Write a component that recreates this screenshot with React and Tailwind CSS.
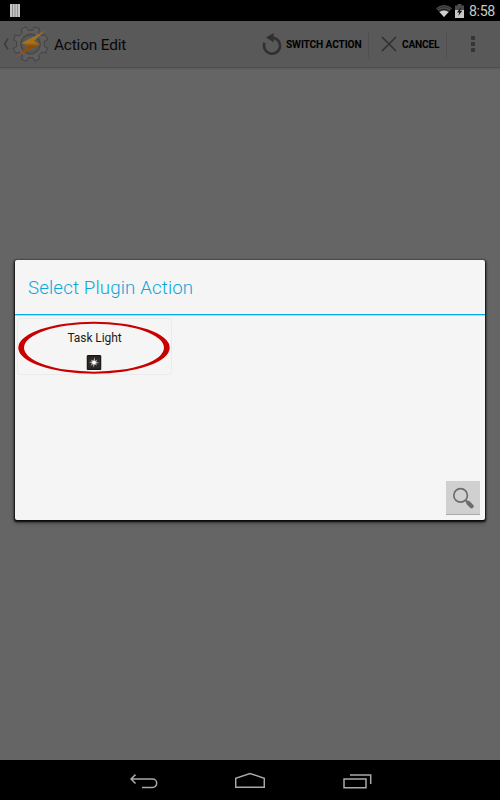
import React from "react";

const TEETH = 8;

// outline of the app's gear, teeth are placed either side of each axis
const gearPoints = () => {
  const points = [];
  for (let i = 0; i < TEETH; i++) {
    const mid = ((i + 0.5) * 360) / TEETH;
    [
      [-13, 14],
      [-10, 17.4],
      [8, 17.8],
      [12, 14],
    ].forEach(([offset, radius]) => {
      const angle = ((mid + offset) * Math.PI) / 180;
      points.push(
        `${(18.5 + radius * Math.cos(angle)).toFixed(2)},${(18 + radius * Math.sin(angle)).toFixed(2)}`
      );
    });
  }
  return points.join(" ");
};

const TaskerLogo = () => (
  <svg className="h-9 w-9 shrink-0 overflow-visible" viewBox="0 0 36 36" fill="none">
    <defs>
      <linearGradient id="bolt" x1="0" y1="0" x2="0" y2="1">
        <stop offset="0" stopColor="#9c7226" />
        <stop offset="0.45" stopColor="#a4741a" />
        <stop offset="0.6" stopColor="#8f4a06" />
        <stop offset="1" stopColor="#965410" />
      </linearGradient>
    </defs>
    <polygon
      points={gearPoints()}
      fill="#5e5e5e"
      stroke="#363636"
      strokeWidth="0.7"
      strokeLinejoin="round"
    />
    <circle cx="18.5" cy="18" r="9.8" fill="#595959" stroke="#454545" strokeWidth="1.2" />
    <circle cx="18.5" cy="18" r="8.2" stroke="#4c4c4c" strokeWidth="0.7" />
    <path
      d="M32.8 4.8L9.8 17L16.2 20.4L4.2 30.8L28.2 18.4L22 15Z"
      fill="url(#bolt)"
    />
  </svg>
);

const StatusBar = () => (
  <div className="flex h-[21px] shrink-0 items-center bg-black pl-[10px] pr-[5px]">
    <svg className="h-[13px] w-[10px]" viewBox="0 0 10 13">
      <rect width="10" height="13" fill="#c4c4c4" />
      <path d="M2.5 0V13M5 0V13M7.5 0V13" stroke="#6a6a6a" strokeWidth="0.6" />
    </svg>
    <div className="ml-auto flex items-center">
      <svg className="h-3 w-4" viewBox="0 0 16 12">
        <path d="M0 3.3Q8 -3.1 16 3.3L8 12Z" fill="#4a4a4a" />
        <path d="M2.7 6.1Q8 2.4 13.3 6.1" stroke="#151515" strokeWidth="0.9" fill="none" />
        <path d="M1.2 4.2Q8 -0.7 14.8 4.2" stroke="#222" strokeWidth="0.7" fill="none" />
        <path d="M3.4 7Q8 4 12.6 7L8 12Z" fill="#d0d0d0" />
      </svg>
      <svg className="ml-[3px] h-[14px] w-[9px]" viewBox="0 0 9 14">
        <path d="M2.5 0H6.5V1.5H9V7H0V1.5H2.5Z" fill="#4b4b4b" />
        <path d="M0 6H9V14H0Z" fill="#c8c8c8" />
        <path d="M6 3L2 8.4H4.3L3.3 12L7.3 6.8H5Z" fill="#111" />
      </svg>
      <span className="ml-[5px] w-[26px] whitespace-nowrap pt-px text-[14.2px] leading-5 tracking-[-0.35px] text-[#c8c8c8]">
        8:58
      </span>
    </div>
  </div>
);

const ActionBar = () => (
  <div className="flex h-[47px] shrink-0 items-center border-b border-[#4d4d4d] bg-[#595959] text-black shadow-[0_1px_2px_rgba(0,0,0,0.12)]">
    <svg className="ml-[3px] h-3 w-[6px]" viewBox="0 0 6 12" fill="none">
      <path d="M5 0.6L1.6 6L5 11.4" stroke="#3c3c3c" strokeWidth="1.6" />
    </svg>
    <div className="ml-[3px]">
      <TaskerLogo />
    </div>
    <h1 className="ml-[6px] w-[76px] whitespace-nowrap pt-[2px] text-[15.4px] leading-5 tracking-[-0.18px] text-[#080808]">
      Action Edit
    </h1>

    <div className="ml-auto flex items-center">
      <svg className="h-[22px] w-[20px]" viewBox="0 0 20 22" fill="none">
        <path
          d="M2.6 9.8A8 8 0 1 0 10.4 4.7"
          stroke="#303030"
          strokeWidth="2.6"
        />
        <path d="M4 4.6L11.6 0V9.2Z" fill="#303030" />
      </svg>
      <span className="ml-[4px] w-[77px] whitespace-nowrap pt-px text-[10.2px] font-bold leading-4 tracking-[-0.15px]">
        SWITCH ACTION
      </span>
      <span className="ml-[5px] h-[27px] w-px bg-[#505050]" />
      <svg className="ml-[12px] h-4 w-4" viewBox="0 0 16 16">
        <path d="M1 1L15 15M15 1L1 15" stroke="#303030" strokeWidth="1.6" />
      </svg>
      <span className="ml-[5px] w-[38px] whitespace-nowrap pt-px text-[10.2px] font-bold leading-4 tracking-[-0.2px]">
        CANCEL
      </span>
      <span className="ml-[6px] h-[27px] w-px bg-[#505050]" />
      <div className="ml-[24px] mr-[25px] flex flex-col gap-[2px]">
        <span className="h-1 w-1 bg-[#363636]" />
        <span className="h-1 w-1 bg-[#363636]" />
        <span className="h-1 w-1 bg-[#363636]" />
      </div>
    </div>
  </div>
);

const PluginDialog = () => (
  <div className="flex h-[260px] w-[470px] flex-col rounded-[2px] bg-[#f5f5f5] shadow-[0_1px_2px_0.5px_rgba(0,0,0,0.9),0_3px_5px_rgba(0,0,0,0.3)]">
    <h2 className="h-[54px] shrink-0 pl-[13px] pt-px text-[18.7px] font-light leading-[55px] tracking-[0.14px] text-[#08a6dc]">
      Select Plugin Action
    </h2>
    <div className="h-[2px] shrink-0 border-b border-[#a9dcef] bg-[#08ace4]" />
    <div className="flex flex-1 flex-col pl-[2px] pt-[2px]">
      {/* Plugin tile */}
      <div className="relative flex h-[57px] w-[155px] flex-col items-center rounded-[4px] border border-[#ebebeb]">
        <span className="mt-[11px] text-[12px] leading-4 tracking-[-0.08px] text-[#1a1a1a]">Task Light</span>
        <svg className="mt-[9px] h-[15px] w-[15px] -translate-x-[0.5px]" viewBox="0 0 15 15">
          <rect width="15" height="15" rx="1.5" fill="#171717" />
          <rect x="1.2" y="1.2" width="12.6" height="12.6" rx="1" fill="#2b2827" />
          <path
            d="M8.4 2L8.6 5.8L11 4.6L9.8 6.8L13 7.9L9.6 8.4L10.6 10.6L8.3 9.5L6.8 12.6L6.5 9.3L3.8 11L5.3 8.3L2.4 7.2L5.4 6.6L4.2 4.4L6.8 5.6Z"
            fill="#b0aaa6"
          />
          <circle cx="7.5" cy="7.5" r="1.8" fill="#fff" />
        </svg>
        {/* Red highlight, thicker at the sides */}
        <svg className="absolute left-0 top-[2px] h-[53px] w-[153px]" viewBox="0 0 153 53">
          <path
            fillRule="evenodd"
            fill="#c80000"
            d="M0.3 26.7A75.7 26 0 1 1 151.7 26.7A75.7 26 0 1 1 0.3 26.7ZM6 26.7A70 24 0 1 0 146 26.7A70 24 0 1 0 6 26.7Z"
          />
        </svg>
      </div>
      <button
        type="button"
        className="mb-[5px] ml-auto mr-[5px] mt-auto flex h-[34px] w-[34px] items-center justify-center border-b border-[#aaa] bg-[#d0d0d0]"
      >
        <svg className="h-[22px] w-[22px]" viewBox="0 0 22 22" fill="none">
          <circle cx="8.6" cy="8.4" r="6.8" stroke="#6c6c6c" strokeWidth="1.7" />
          <path d="M13.4 13L16 15.5" stroke="#6c6c6c" strokeWidth="2" />
          <path d="M16.4 16L19.6 19.2" stroke="#6c6c6c" strokeWidth="4.2" strokeLinecap="round" />
        </svg>
      </button>
    </div>
  </div>
);

const NavBar = () => (
  <div className="flex h-10 shrink-0 items-center bg-black pl-[130px]">
    <svg className="h-[15px] w-[28px] translate-y-px" viewBox="0 0 28 15" fill="none" stroke="#a9a9a9" strokeWidth="1.5">
      <path d="M1 5H22.5A4.2 4.2 0 0 1 22.5 13.4H12M5.5 0.6L1 5L5.5 9.6" />
    </svg>
    <svg className="ml-[77px] h-4 w-[30px]" viewBox="0 0 30 16" fill="none" stroke="#a9a9a9" strokeWidth="1.5">
      <path d="M0.7 15.3V6.2L15 1.5L29.3 6.2V15.3Z" />
    </svg>
    <svg className="ml-[78px] h-[15px] w-[29px] translate-y-px" viewBox="0 0 29 15" fill="none" stroke="#a9a9a9" strokeWidth="1.5">
      <path d="M1 5H23V13.7H1ZM7 1H27.7V10" />
    </svg>
  </div>
);

const App = () => {
  return (
    <div className="flex h-[800px] w-[500px] flex-col overflow-hidden bg-[#656565] font-[Roboto,sans-serif]">
      <StatusBar />
      <ActionBar />
      <main className="flex flex-1 flex-col items-center pt-[192px]">
        <PluginDialog />
      </main>
      <NavBar />
    </div>
  );
};

export default App;
